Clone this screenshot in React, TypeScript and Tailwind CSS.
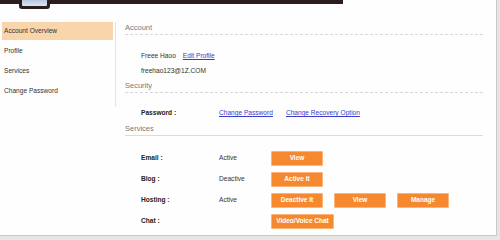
import React from 'react';

const font = { fontFamily: '"Liberation Sans", Arial, sans-serif' };

const menu = ['Account Overview', 'Profile', 'Services', 'Change Password'];

type Service = { name: string; status: string; actions: { label: string; wide?: boolean }[] };

const services: Service[] = [
  { name: 'Email :', status: 'Active', actions: [{ label: 'View' }] },
  { name: 'Blog :', status: 'Deactive', actions: [{ label: 'Active It' }] },
  { name: 'Hosting :', status: 'Active', actions: [{ label: 'Deactive It' }, { label: 'View' }, { label: 'Manage' }] },
  { name: 'Chat :', status: '', actions: [{ label: 'Video/Voice Chat', wide: true }] },
];

const SectionHead = ({ title, solid }: { title: string; solid?: boolean }) => (
  <div
    className={
      'h-[13px] w-[358px] flex items-center text-[7.5px] leading-none text-[#7a7a7a] border-b ' +
      (solid ? 'border-solid border-[#dcdcdc]' : 'border-dashed border-[#d6d6dc]')
    }
  >
    {title}
  </div>
);

const OrangeButton = ({ label, wide }: { label: string; wide?: boolean }) => (
  <button
    className={
      'h-[15px] bg-[#f6892f] border border-[#fbb47a] rounded-[1px] text-white font-bold text-[6.5px] leading-none ' +
      (wide ? 'w-[63px]' : 'w-[52px]')
    }
  >
    {label}
  </button>
);

export default function App() {
  return (
    <div className="w-[500px] h-[240px] bg-[#e6e6e6] overflow-hidden" style={font}>
      <div className="relative w-[497px] h-[236px] bg-[#fdfefd] border-r border-b border-[#c9c9c9]">
        {/* top strip + device icon */}
        <div className="h-[4px] w-[343px] bg-[#2b1d1e]" />
        <div className="absolute left-[19px] top-0 w-[31px] h-[9px] bg-[#2b1d1e] rounded-b-[3px] px-[3px]">
          <div className="h-[6px] bg-gradient-to-b from-[#b9c6dc] to-[#dfe6f2] rounded-b-[1px]" />
        </div>

        <div className="flex">
          {/* sidebar */}
          <div className="w-[116px] pt-[18px]">
            <div className="border-r border-[#e4e4e4] pl-[2px] pr-[2px] pb-[6px]">
              {menu.map((m, i) => (
                <div
                  key={m}
                  className={
                    'flex items-center px-[2px] text-[6.6px] text-[#333] ' +
                    (i === 0 ? 'h-[18px] mb-[1px] bg-[#f8d5ab]' : 'h-[20px]')
                  }
                >
                  {m}
                </div>
              ))}
            </div>
          </div>

          {/* main */}
          <div className="pl-[9px] pt-[18px] flex flex-col">
            <SectionHead title="Account" />
            <div className="pl-[16px] pt-[13px] text-[6.6px] text-[#333]">
              <div className="h-[15px] flex items-center">
                <span>Freee Haoo</span>
                <a className="ml-[7px] text-[#3b3bd0] underline">Edit Profile</a>
              </div>
              <div className="h-[15px] flex items-center">freehao123@1Z.COM</div>
            </div>

            <div className="mt-[2px]">
              <SectionHead title="Security" />
            </div>
            <div className="pl-[16px] pt-[15px] h-[30px] flex items-start text-[6.6px]">
              <div className="w-[78px] font-bold text-[#222]">Password :</div>
              <a className="text-[#3b3bd0] underline">Change Password</a>
              <a className="ml-[13px] text-[#3b3bd0] underline">Change Recovery Option</a>
            </div>

            <SectionHead title="Services" solid />
            <div className="pl-[16px] pt-[15px] flex flex-col gap-[6px] text-[6.6px]">
              {services.map((s) => (
                <div key={s.name} className="h-[15px] flex items-center">
                  <div className="w-[78px] font-bold text-[#222] -mt-[2px]">{s.name}</div>
                  <div className="w-[52px] text-[#333] -mt-[2px]">{s.status}</div>
                  <div className="flex gap-[11px]">
                    {s.actions.map((a, i) => (
                      <OrangeButton key={i} label={a.label} wide={a.wide} />
                    ))}
                  </div>
                </div>
              ))}
            </div>
          </div>
        </div>
      </div>
    </div>
  );
}
